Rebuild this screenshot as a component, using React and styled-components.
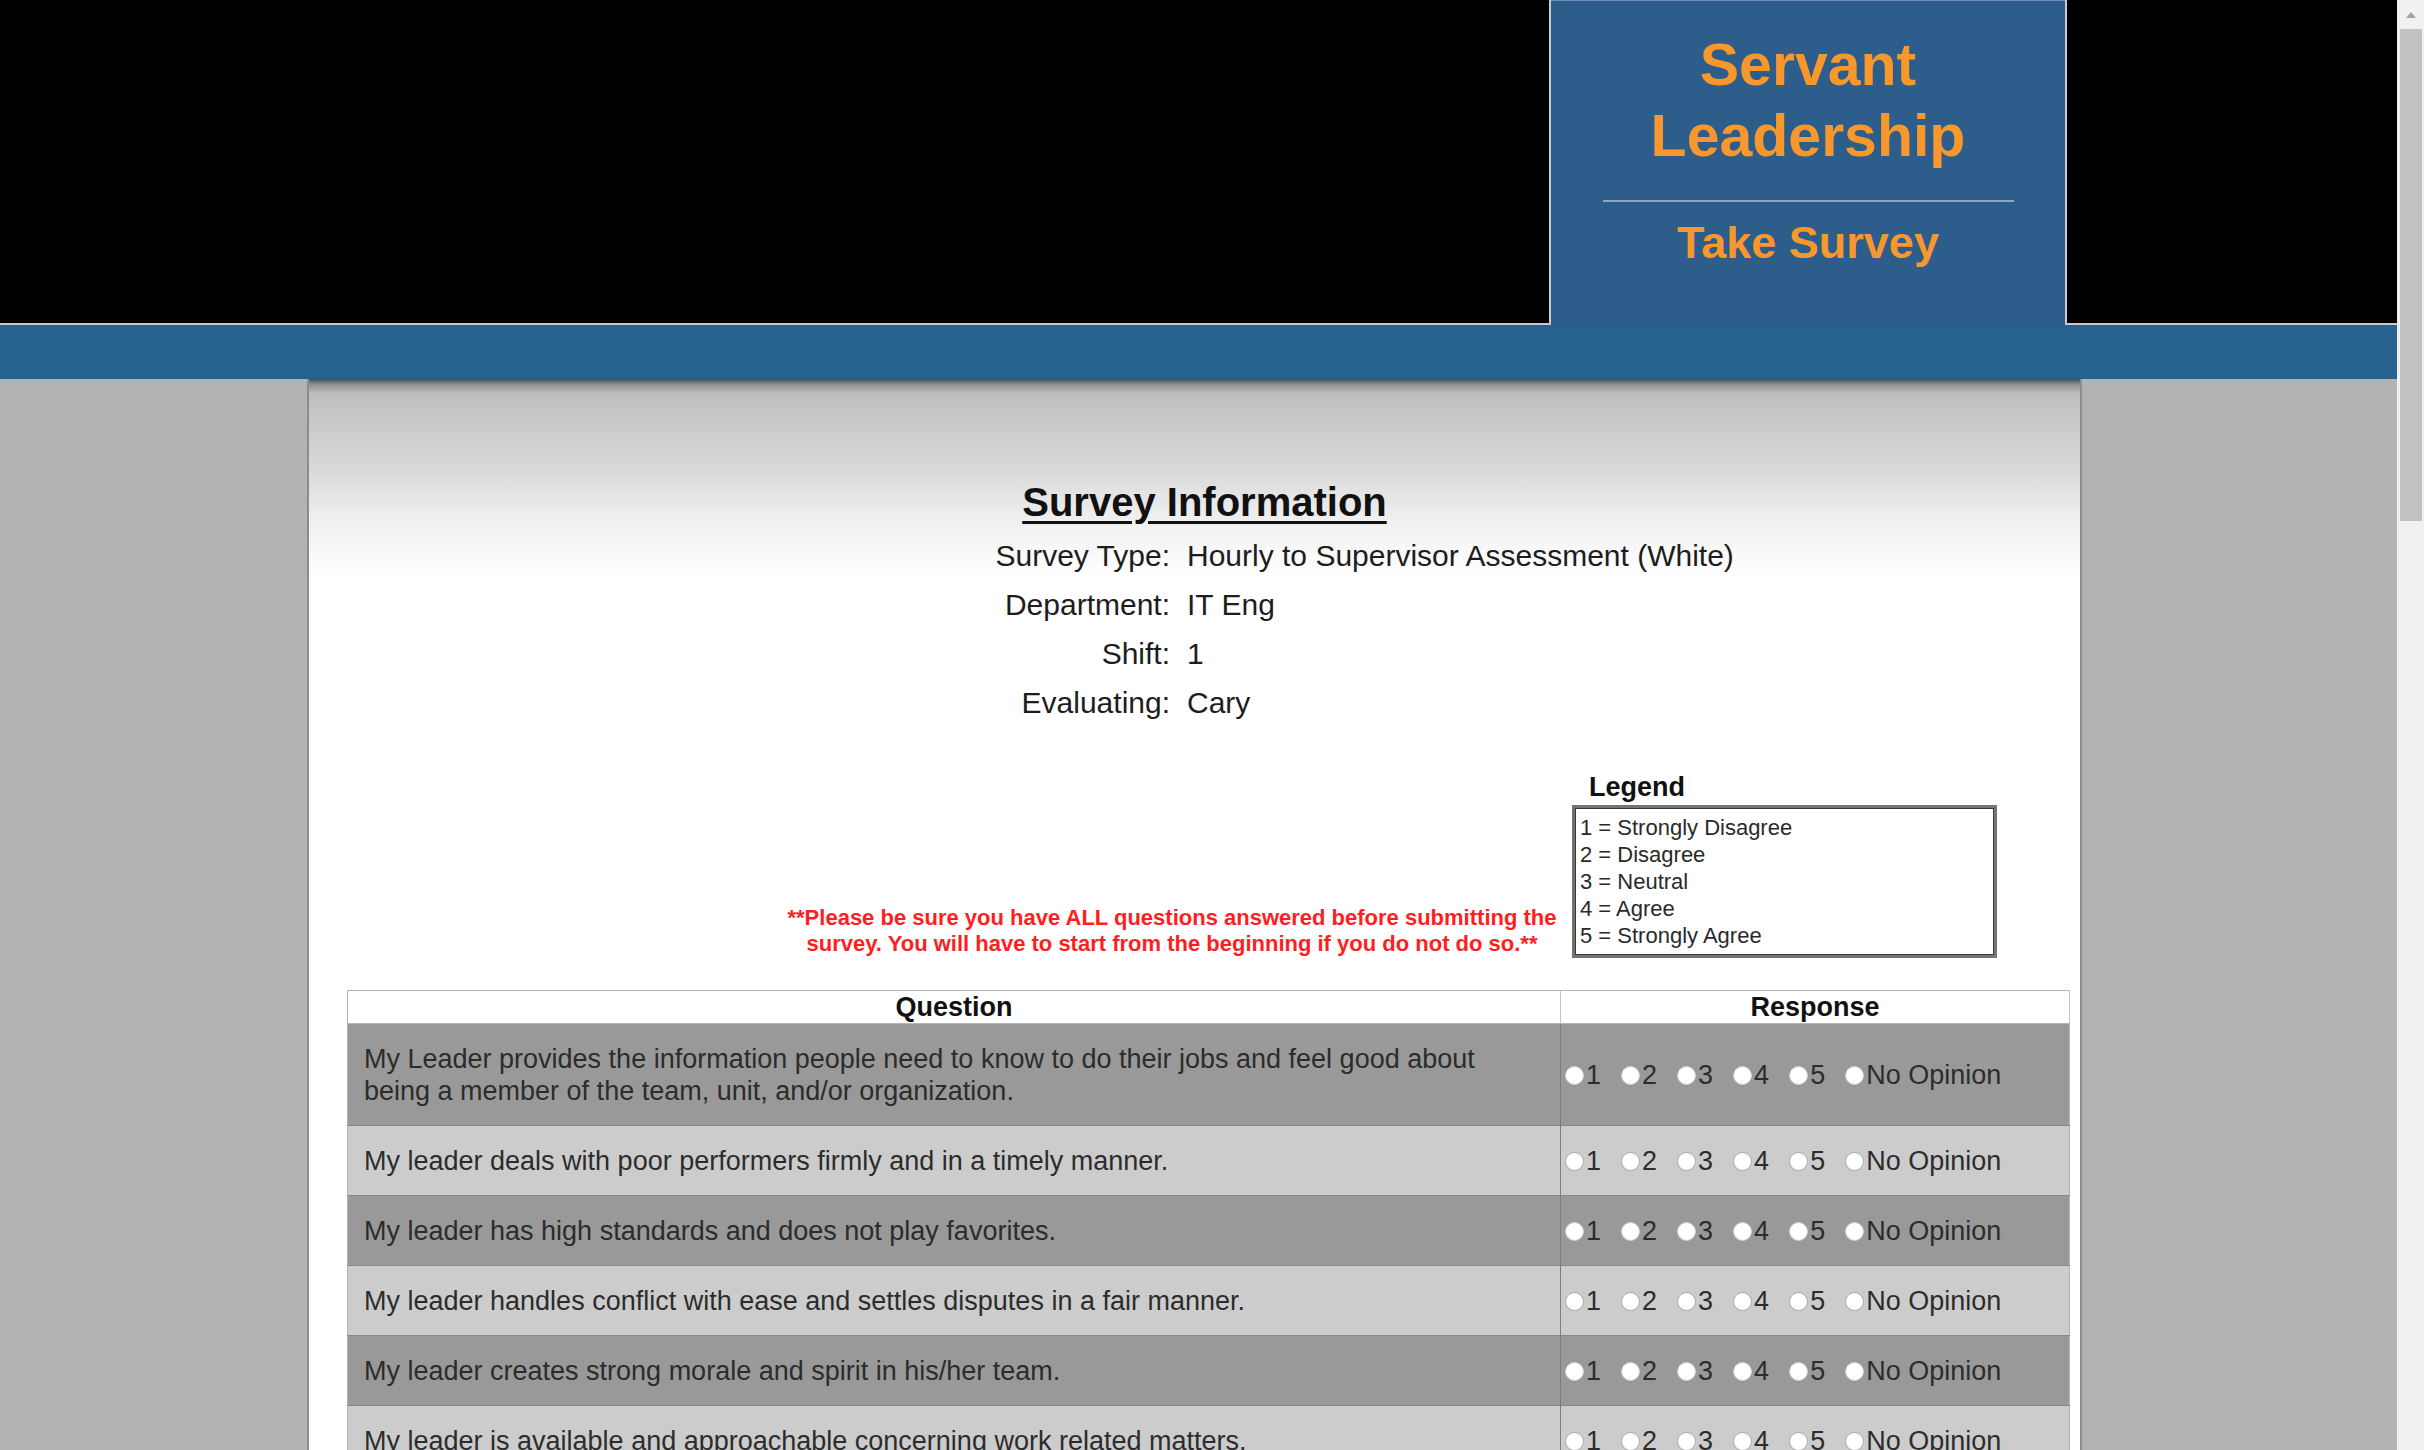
import React from "react";
import styled, { createGlobalStyle } from "styled-components";

const GlobalStyle = createGlobalStyle`
  html, body {
    margin: 0;
    padding: 0;
    height: 100%;
    overflow: hidden;
  }
  body {
    font-family: "Liberation Sans", Arial, Helvetica, sans-serif;
    background: #b3b3b3;
    color: #222;
  }
  #root { height: 100%; }
`;

const Viewport = styled.div`
  display: flex;
  width: 100%;
  height: 1450px;
  overflow: hidden;
`;

const Page = styled.div`
  flex: 1;
  min-width: 0;
  overflow: hidden;
  background: #b3b3b3;
`;

/* ---------- header ---------- */
const Header = styled.header`
  display: flex;
  height: 325px;
`;

const BlackBlock = styled.div`
  background: #000;
  height: 323px;
  border-bottom: 2px solid #c9c9c9;
  ${(p) =>
    p.$side === "left"
      ? "flex: 1; border-right: 2px solid #c9c9c9;"
      : "width: 330px; border-left: 2px solid #c9c9c9;"}
`;

const LogoPanel = styled.div`
  width: 514px;
  height: 325px;
  box-sizing: border-box;
  background: #2d5d8b;
  border-top: 1px solid #6f8fb3;
  padding-top: 29px;
  display: flex;
  flex-direction: column;
  align-items: center;
`;

const LogoTitle = styled.h1`
  margin: 0;
  font-size: 59px;
  line-height: 71px;
  font-weight: bold;
  color: #f7972c;
  text-align: center;
`;

const LogoRule = styled.hr`
  width: 411px;
  margin: 28px 0 15px;
  border: 0;
  border-top: 2px solid #8ca6c3;
`;

const LogoSub = styled.div`
  font-size: 45px;
  line-height: 52px;
  font-weight: bold;
  color: #f7972c;
`;

const Band = styled.div`
  height: 54px;
  background: #27628e;
`;

/* ---------- card ---------- */
const Card = styled.main`
  width: 1775px;
  margin: 0 0 0 307px;
  box-sizing: border-box;
  min-height: 1200px;
  border-left: 2px solid #8c8c8c;
  border-right: 2px solid #8c8c8c;
  padding-top: 100px;
  background: linear-gradient(
    to bottom,
    #4a4a4a 0px,
    #8e8e8e 5px,
    #bdbdbd 14px,
    #c4c4c4 30px,
    #d9d9d9 90px,
    #efefef 140px,
    #ffffff 195px
  );
`;

const SectionTitle = styled.h2`
  margin: 0;
  padding-left: 20px;
  text-align: center;
  font-size: 40px;
  line-height: 46px;
  font-weight: bold;
  text-decoration: underline;
  text-decoration-thickness: 3px;
  text-underline-offset: 5px;
  color: #111;
`;

const InfoGrid = styled.dl`
  display: grid;
  grid-template-columns: 861px 1fr;
  column-gap: 17px;
  margin: 6px 0 0;
  font-size: 30px;
  line-height: 49px;
  color: #1d1d1d;
`;

const InfoLabel = styled.dt`
  text-align: right;
  margin: 0;
`;

const InfoValue = styled.dd`
  margin: 0;
`;

const NoteRow = styled.div`
  display: flex;
  align-items: flex-end;
  margin-top: 45px;
  padding-left: 475px;
`;

const Warning = styled.p`
  width: 776px;
  margin: 0 0 1px;
  text-align: center;
  font-size: 22px;
  line-height: 26px;
  font-weight: bold;
  color: #ff1e1e;
`;

const LegendBlock = styled.div`
  margin-left: 12px;
  width: 425px;
`;

const LegendHeading = styled.div`
  padding-left: 17px;
  font-size: 27px;
  line-height: 30px;
  font-weight: bold;
  color: #111;
  margin-bottom: 3px;
`;

const LegendBox = styled.ul`
  list-style: none;
  margin: 0;
  padding: 6px 5px 6px;
  border: 3px solid #747474;
  box-shadow: inset 0 0 0 1px #3a3a3a;
  background: #fff;
  font-size: 22px;
  line-height: 27px;
  color: #2a2a2a;
`;

/* ---------- survey table ---------- */
const SurveyTable = styled.table`
  width: 1720px;
  margin: 32px 0 0 38px;
  border-collapse: collapse;
  table-layout: fixed;
  border: 1px solid #b4b4b4;
`;

const HeadCell = styled.th`
  background: #fff;
  padding: 0;
  height: 32px;
  font-size: 27px;
  line-height: 32px;
  font-weight: bold;
  color: #111;
  text-align: center;
  border-bottom: 1px solid #b4b4b4;
  border-right: 1px solid #c4c4c4;
  width: ${(p) => p.$width}px;
`;

const Row = styled.tr`
  background: ${(p) => (p.$dark ? "#999999" : "#cccccc")};
  border-bottom: 1px solid #888;
`;

const QuestionCell = styled.td`
  padding: 19px 30px 18px 16px;
  font-size: 27px;
  line-height: 32px;
  color: #2c2c2c;
  border-right: 1px solid #7d7d7d;
  vertical-align: middle;
`;

const ResponseCell = styled.td`
  padding: 19px 4px 18px;
  vertical-align: middle;
`;

const RadioGroup = styled.div`
  display: flex;
  align-items: center;
  gap: 20px;
`;

const RadioOption = styled.label`
  display: flex;
  align-items: center;
  font-size: 27px;
  line-height: 32px;
  color: #2c2c2c;
`;

const Radio = styled.input.attrs({ type: "radio" })`
  appearance: none;
  -webkit-appearance: none;
  width: 19px;
  height: 19px;
  margin: 0 2px 0 0;
  border-radius: 50%;
  background: #fff;
  border: 1px solid ${(p) => (p.$dark ? "#cfcfcf" : "#a8a8a8")};
  box-sizing: border-box;
  flex: none;
`;

/* ---------- scrollbar ---------- */
const ScrollTrack = styled.div`
  width: 27px;
  height: 1450px;
  background: #f1f1f1;
  display: flex;
  flex-direction: column;
  align-items: center;
`;

const ScrollArrow = styled.div`
  height: 29px;
  display: flex;
  align-items: center;
  justify-content: center;
`;

const ScrollThumb = styled.div`
  width: 22px;
  height: 492px;
  background: #c1c1c1;
`;

const info = [
  ["Survey Type:", "Hourly to Supervisor Assessment (White)"],
  ["Department:", "IT Eng"],
  ["Shift:", "1"],
  ["Evaluating:", "Cary"],
];

const legend = [
  "1 = Strongly Disagree",
  "2 = Disagree",
  "3 = Neutral",
  "4 = Agree",
  "5 = Strongly Agree",
];

const questions = [
  "My Leader provides the information people need to know to do their jobs and feel good about being a member of the team, unit, and/or organization.",
  "My leader deals with poor performers firmly and in a timely manner.",
  "My leader has high standards and does not play favorites.",
  "My leader handles conflict with ease and settles disputes in a fair manner.",
  "My leader creates strong morale and spirit in his/her team.",
  "My leader is available and approachable concerning work related matters.",
];

const options = ["1", "2", "3", "4", "5", "No Opinion"];

export default function App() {
  return (
    <>
      <GlobalStyle />
      <Viewport>
        <Page>
          <Header>
            <BlackBlock $side="left" />
            <LogoPanel>
              <LogoTitle>
                Servant
                <br />
                Leadership
              </LogoTitle>
              <LogoRule />
              <LogoSub>Take Survey</LogoSub>
            </LogoPanel>
            <BlackBlock $side="right" />
          </Header>
          <Band />
          <Card>
            <SectionTitle>Survey Information</SectionTitle>
            <InfoGrid>
              {info.map(([k, v]) => (
                <React.Fragment key={k}>
                  <InfoLabel>{k}</InfoLabel>
                  <InfoValue>{v}</InfoValue>
                </React.Fragment>
              ))}
            </InfoGrid>
            <NoteRow>
              <Warning>
                **Please be sure you have ALL questions answered before submitting the survey. You will
                have to start from the beginning if you do not do so.**
              </Warning>
              <LegendBlock>
                <LegendHeading>Legend</LegendHeading>
                <LegendBox>
                  {legend.map((l) => (
                    <li key={l}>{l}</li>
                  ))}
                </LegendBox>
              </LegendBlock>
            </NoteRow>
            <SurveyTable>
              <thead>
                <tr>
                  <HeadCell $width={1212}>Question</HeadCell>
                  <HeadCell $width={508}>Response</HeadCell>
                </tr>
              </thead>
              <tbody>
                {questions.map((q, i) => {
                  const dark = i % 2 === 0;
                  return (
                    <Row key={i} $dark={dark}>
                      <QuestionCell>{q}</QuestionCell>
                      <ResponseCell>
                        <RadioGroup>
                          {options.map((o) => (
                            <RadioOption key={o}>
                              <Radio name={`q${i}`} value={o} $dark={dark} />
                              {o}
                            </RadioOption>
                          ))}
                        </RadioGroup>
                      </ResponseCell>
                    </Row>
                  );
                })}
              </tbody>
            </SurveyTable>
          </Card>
        </Page>
        <ScrollTrack>
          <ScrollArrow>
            <svg width="10" height="6" viewBox="0 0 10 6">
              <polygon points="5,0 10,6 0,6" fill="#a3a3a3" />
            </svg>
          </ScrollArrow>
          <ScrollThumb />
        </ScrollTrack>
      </Viewport>
    </>
  );
}
